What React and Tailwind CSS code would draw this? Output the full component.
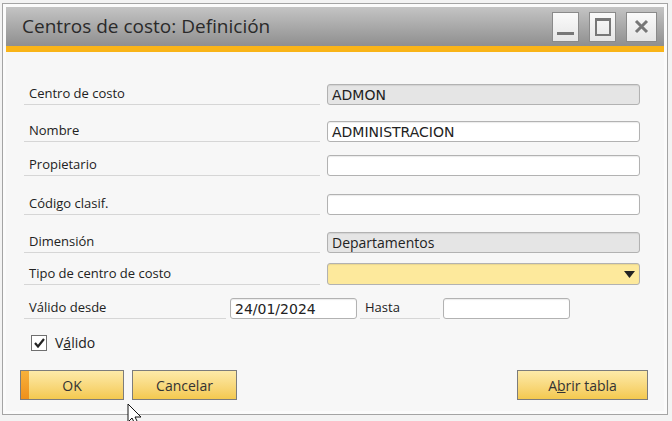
import React from 'react';

const labelFont = { fontFamily: "'Open Sans', 'Noto Sans', sans-serif" };
const fieldFont = { fontFamily: "'DejaVu Sans', 'Verdana', sans-serif" };

const Label = ({ children, className = '' }) => (
  <div className={`flex items-end border-b border-[#d6d6d6] pl-[5px] pb-[1px] text-[13px] text-[#222] ${className}`} style={labelFont}>
    {children}
  </div>
);

const Field = ({ value, gray, yellow, arrow, className = '' }) => {
  let bg = 'bg-white';
  if (gray) bg = 'bg-[#e5e5e5]';
  if (yellow) bg = 'bg-[#fde99c]';
  return (
    <div className={`relative flex items-center rounded-[3px] border border-[#b2b2b2] px-[4px] text-[14px] text-[#222] shadow-[inset_0_1px_1px_rgba(0,0,0,0.08)] ${bg} ${className}`} style={fieldFont}>
      <span className="leading-none">{value}</span>
      {arrow && (
        <svg className="absolute right-[4px] top-[7px]" width="11" height="7" viewBox="0 0 11 7">
          <path d="M0 0 H11 L5.5 7 Z" fill="#222" />
        </svg>
      )}
    </div>
  );
};

const Row = ({ label, className = '', children }) => (
  <div className={`flex h-[21px] ${className}`}>
    <Label className="w-[296px]">{label}</Label>
    <div className="ml-[7px] flex w-[313px]">{children}</div>
  </div>
);

const Button = ({ children, className = '', primary }) => (
  <button
    className={`relative flex h-[30px] items-center justify-center overflow-hidden border border-[#7c7c7c] bg-gradient-to-b from-[#fdeaa8] to-[#f4c94e] text-[14px] text-[#333] ${className}`}
    style={labelFont}
  >
    {primary && <span className="absolute left-0 top-0 h-full w-[8px] bg-gradient-to-b from-[#f7b13a] to-[#ee9019]" />}
    <span className="relative">{children}</span>
  </button>
);

const TitleButton = ({ children, className = 'w-[27px]' }) => (
  <div className={`flex h-[30px] items-center justify-center border border-[#8a8a8a] bg-gradient-to-b from-[#fafafa] to-[#e6e6e6] ${className}`}>
    {children}
  </div>
);

export default function App() {
  return (
    <div className="relative h-[421px] w-[672px] overflow-hidden bg-[#f3f3f3]">
      <div className="ml-[2px] mt-[3px] flex h-[412px] w-[666px] flex-col border border-[#a4a4a4] bg-[#fbfbfb] p-[3px]">
        {/* title bar */}
        <div className="flex h-[39px] items-center justify-between bg-gradient-to-b from-[#c4c4c4] to-[#8f8f8f] pl-[16px] pr-[7px]">
          <span className="text-[19px] text-[#2a2a2a]" style={labelFont}>Centros de costo: Definición</span>
          <div className="flex gap-[10px]">
            <TitleButton>
              <span className="mt-[14px] h-[3px] w-[17px] bg-[#777]" />
            </TitleButton>
            <TitleButton>
              <span className="h-[18px] w-[16px] border-[2px] border-t-[3px] border-[#777]" />
            </TitleButton>
            <TitleButton className="w-[31px]">
              <svg width="15" height="15" viewBox="0 0 15 15">
                <path d="M2 2 L13 13 M13 2 L2 13" stroke="#777" strokeWidth="3" />
              </svg>
            </TitleButton>
          </div>
        </div>
        <div className="h-[6px] bg-[#f9b418]" />
        {/* body */}
        <div className="flex flex-1 flex-col bg-[#f7f7f7] pl-[18px] pr-[16px] pt-[32px]">
          <Row label="Centro de costo">
            <Field value="ADMON" gray className="w-full" />
          </Row>
          <Row label="Nombre" className="mt-[16px]">
            <Field value="ADMINISTRACION" className="w-full" />
          </Row>
          <Row label="Propietario" className="mt-[13px]">
            <Field value="" className="w-full" />
          </Row>
          <Row label="Código clasif." className="mt-[18px]">
            <Field value="" className="w-full" />
          </Row>
          <Row label="Dimensión" className="mt-[17px]">
            <Field value={<span style={labelFont} className="text-[14px]">Departamentos</span>} gray className="w-full" />
          </Row>
          <Row label="Tipo de centro de costo" className="mt-[10px] h-[22px]">
            <Field value="" yellow arrow className="w-full" />
          </Row>
          <div className="mt-[13px] flex h-[21px]">
            <Label className="w-[202px]">Válido desde</Label>
            <Field value="24/01/2024" className="ml-[4px] w-[127px]" />
            <Label className="ml-[3px] w-[80px]">Hasta</Label>
            <Field value="" className="ml-[3px] w-[127px]" />
          </div>
          <div className="mt-[13px] flex items-center">
            <div className="ml-[7px] flex h-[16px] w-[16px] items-center justify-center border border-[#6f6f6f] bg-white">
              <svg width="11" height="10" viewBox="0 0 11 10">
                <path d="M1 5 L4 8.5 L10 1" fill="none" stroke="#222" strokeWidth="2.2" />
              </svg>
            </div>
            <span className="ml-[8px] text-[14px] text-[#222]" style={labelFont}>V<u>á</u>lido</span>
          </div>
          <div className="mt-[17px] flex">
            <Button primary className="-ml-[4px] w-[104px]">OK</Button>
            <Button className="ml-[8px] w-[105px]">Cancelar</Button>
            <Button className="ml-auto w-[131px]">A<u>b</u>rir tabla</Button>
          </div>
        </div>
      </div>
      {/* mouse pointer */}
      <svg className="absolute left-[127px] top-[403px]" width="20" height="22" viewBox="0 0 20 22">
        <path d="M1 1 L1 19 L5 15 L8 21 L11 20 L8 14 L14 14 Z" fill="#fff" stroke="#111" strokeWidth="1" />
      </svg>
    </div>
  );
}
